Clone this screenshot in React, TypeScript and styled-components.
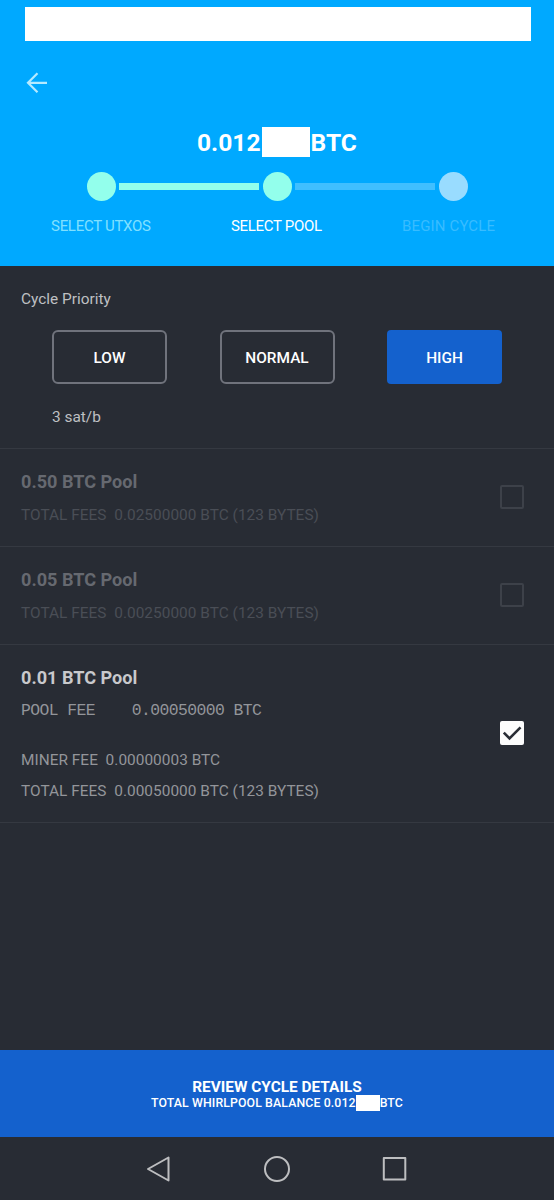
import React from "react";
import styled, { createGlobalStyle } from "styled-components";

const Global = createGlobalStyle`
  * { box-sizing: border-box; }
  body { margin: 0; background: #282c34; font-family: Roboto, "Liberation Sans", sans-serif; }
  button { font-family: inherit; }
`;

const Screen = styled.div`
  width: 554px;
  height: 1200px;
  display: flex;
  flex-direction: column;
  background: #282c34;
  overflow: hidden;
`;

const Header = styled.header`
  height: 266.4px;
  flex: none;
  display: flex;
  flex-direction: column;
  background: #00a9ff;
  padding-top: 6.5px;
`;

const StatusBar = styled.div`
  height: 34px;
  margin: 0 23px 0 25px;
  background: #fff;
`;

const BackButton = styled.button`
  width: 28px;
  height: 28px;
  margin: 28.5px 0 0 22px;
  padding: 0;
  border: 0;
  background: none;
  svg { display: block; }
`;

const Amount = styled.div`
  height: 30px;
  margin: 30px 0 0 197px;
  display: flex;
  align-items: center;
  color: #fff;
  font-size: 24.6px;
  font-weight: 700;
  white-space: nowrap;
`;

const AmountPart = styled.span<{ $w: number; $indent?: number }>`
  width: ${(p) => p.$w}px;
  padding: 2px 0 0 ${(p) => p.$indent ?? 0}px;
  line-height: 30px;
`;

const Redaction = styled.span<{ $w: number; $h: number }>`
  flex: none;
  width: ${(p) => p.$w}px;
  height: ${(p) => p.$h}px;
  background: #fff;
`;

const Track = styled.div`
  height: 29px;
  margin: 15px 86.5px 0 86.5px;
  display: flex;
  align-items: center;
  gap: 3.5px;
`;

const Dot = styled.span<{ $color: string }>`
  flex: none;
  width: 29px;
  height: 29px;
  border-radius: 50%;
  background: ${(p) => p.$color};
`;

const Line = styled.span<{ $color: string }>`
  flex: 1;
  height: 7px;
  background: ${(p) => p.$color};
`;

const StepLabels = styled.div`
  display: grid;
  grid-template-columns: 100px 91px 93px;
  column-gap: 80px;
  margin: 16px 0 0 51px;
  font-size: 15px;
  line-height: 18px;
  white-space: nowrap;
`;

const StepLabel = styled.span<{ $color: string; $ls: number }>`
  color: ${(p) => p.$color};
  letter-spacing: ${(p) => p.$ls}px;
`;

const Priority = styled.section`
  height: 182.2px;
  flex: none;
  padding: 23.5px 52px 0;
  border-bottom: 1px solid #353941;
  color: #bfc0c3;
  font-size: 15.4px;
  line-height: 18px;
`;

const PriorityTitle = styled.div`
  margin-left: -31px;
`;

const PriorityButtons = styled.div`
  display: flex;
  justify-content: space-between;
  margin: 22px 0 23.5px;
`;

const PriorityButton = styled.button<{ $active?: boolean }>`
  width: 115px;
  height: 54.5px;
  padding: 1px 0 0;
  border: ${(p) => (p.$active ? "0" : "2px solid #70737c")};
  border-radius: ${(p) => (p.$active ? 4 : 6)}px;
  background: ${(p) => (p.$active ? "#1461cd" : "transparent")};
  color: #fff;
  font-size: 15.4px;
  font-weight: 500;
`;

const PoolRow = styled.section<{ $h: number; $disabled?: boolean }>`
  flex: none;
  height: ${(p) => p.$h}px;
  display: flex;
  justify-content: space-between;
  align-items: center;
  padding: 0 30px 0 21px;
  border-bottom: 1px solid #353941;
  color: ${(p) => (p.$disabled ? "#4a4e56" : "#93959a")};
`;

const PoolInfo = styled.div`
  align-self: flex-start;
  padding-top: 22px;
  font-size: 15.4px;
  line-height: 18px;
  white-space: pre;
`;

const PoolName = styled.div<{ $disabled?: boolean }>`
  color: ${(p) => (p.$disabled ? "#666970" : "#c8c9cc")};
  font-size: 18.1px;
  font-weight: 700;
  line-height: 22px;
  margin-bottom: 13px;
`;

const Fee = styled.div<{ $top?: number }>`
  margin-top: ${(p) => p.$top ?? 0}px;
  letter-spacing: 0.03px;
`;

const MonoFee = styled.div`
  font-family: "Liberation Mono", monospace;
  font-size: 16.4px;
  letter-spacing: -0.6px;
`;

const Box = styled.span<{ $checked?: boolean }>`
  width: 24px;
  height: 24px;
  margin-bottom: 1px;
  border-radius: 2px;
  border: ${(p) => (p.$checked ? "0" : "2px solid #3d4149")};
  background: ${(p) => (p.$checked ? "#fcfcfc" : "transparent")};
  svg { display: block; }
`;

const Spacer = styled.div`
  flex: 1;
`;

const Review = styled.button`
  flex: none;
  height: 87.5px;
  padding: 3px 0 0;
  border: 0;
  background: #1461cd;
  color: #fff;
  display: flex;
  flex-direction: column;
  align-items: center;
  justify-content: center;
`;

const ReviewTitle = styled.span`
  font-size: 15.4px;
  font-weight: 700;
  line-height: 16px;
`;

const ReviewBalance = styled.span`
  display: flex;
  align-items: center;
  height: 16px;
  font-size: 12.3px;
  font-weight: 500;
  line-height: 16px;
  letter-spacing: 0.12px;
  white-space: nowrap;
`;

const NavBar = styled.nav`
  flex: none;
  height: 63px;
  display: flex;
  align-items: center;
  justify-content: space-between;
  padding: 0 145px;
  svg { display: block; }
`;

const pools = [
  { name: "0.50 BTC Pool", fee: "0.02500000" },
  { name: "0.05 BTC Pool", fee: "0.00250000" },
];

export default function App() {
  return (
    <Screen>
      <Global />
      <Header>
        <StatusBar />
        <BackButton aria-label="Back">
          <svg width="28" height="28" viewBox="0 0 28 28" fill="none" stroke="#b5eaff" strokeWidth="2.2">
            <path d="M25 13.8H6M15.5 4.3L6 13.8l9.5 9.5" />
          </svg>
        </BackButton>
        <Amount>
          <AmountPart $w={65}>0.012</AmountPart>
          <Redaction $w={48} $h={29.5} />
          <AmountPart $w={50} $indent={0.6}>BTC</AmountPart>
        </Amount>
        <Track>
          <Dot $color="#93ffec" />
          <Line $color="#93ffec" />
          <Dot $color="#93ffec" />
          <Line $color="#40bfff" />
          <Dot $color="#99dcff" />
        </Track>
        <StepLabels>
          <StepLabel $color="#80e0ff" $ls={-0.28}>SELECT UTXOS</StepLabel>
          <StepLabel $color="#ffffff" $ls={-0.3}>SELECT POOL</StepLabel>
          <StepLabel $color="#38bcff" $ls={0.15}>BEGIN CYCLE</StepLabel>
        </StepLabels>
      </Header>

      <Priority>
        <PriorityTitle>Cycle Priority</PriorityTitle>
        <PriorityButtons>
          <PriorityButton>LOW</PriorityButton>
          <PriorityButton>NORMAL</PriorityButton>
          <PriorityButton $active>HIGH</PriorityButton>
        </PriorityButtons>
        <div>3 sat/b</div>
      </Priority>

      {pools.map((p) => (
        <PoolRow key={p.name} $h={98.3} $disabled>
          <PoolInfo>
            <PoolName $disabled>{p.name}</PoolName>
            <Fee>{`TOTAL FEES  ${p.fee} BTC (123 BYTES)`}</Fee>
          </PoolInfo>
          <Box />
        </PoolRow>
      ))}

      <PoolRow $h={178}>
        <PoolInfo>
          <PoolName>0.01 BTC Pool</PoolName>
          <MonoFee>{"POOL FEE    0.00050000 BTC"}</MonoFee>
          <Fee $top={30.5}>{"MINER FEE  0.00000003 BTC"}</Fee>
          <Fee $top={13}>{"TOTAL FEES  0.00050000 BTC (123 BYTES)"}</Fee>
        </PoolInfo>
        <Box $checked>
          <svg width="24" height="24" viewBox="0 0 24 24" fill="none" stroke="#282c34" strokeWidth="2.6">
            <path d="M3.8 11.6l5.7 5.7L20.5 6.3" />
          </svg>
        </Box>
      </PoolRow>

      <Spacer />

      <Review>
        <ReviewTitle>REVIEW CYCLE DETAILS</ReviewTitle>
        <ReviewBalance>
          TOTAL WHIRLPOOL BALANCE 0.012
          <Redaction $w={24} $h={16} />
          BTC
        </ReviewBalance>
      </Review>

      <NavBar>
        <svg width="28" height="28" viewBox="0 0 28 28" fill="none" stroke="#bdbec0" strokeWidth="2" strokeLinejoin="round">
          <path d="M23.5 2.5v23L3 14z" />
        </svg>
        <svg width="28" height="28" viewBox="0 0 28 28" fill="none" stroke="#bdbec0" strokeWidth="2">
          <circle cx="14" cy="14" r="12" />
        </svg>
        <svg width="28" height="28" viewBox="0 0 28 28" fill="none" stroke="#bdbec0" strokeWidth="2" strokeLinejoin="round">
          <rect x="2.8" y="3" width="21.5" height="21.5" />
        </svg>
      </NavBar>
    </Screen>
  );
}
